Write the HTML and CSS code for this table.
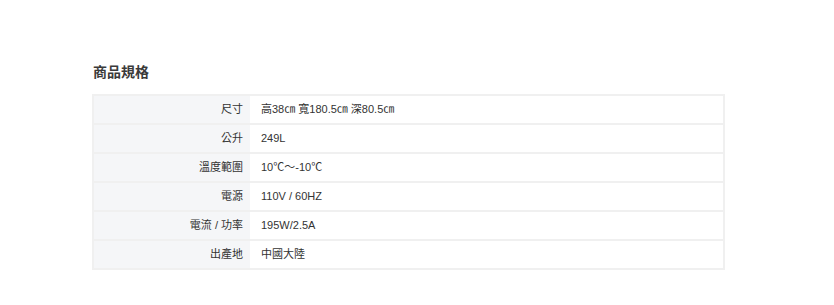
FILE: index.html
```html
<!DOCTYPE html>
<html lang="zh-Hant">
<head>
    <meta charset="UTF-8">
    <meta name="viewport" content="width=device-width, initial-scale=1.0">
    <title>商品規格</title>
    <link rel="stylesheet" href="styles.css">
</head>
<body>

    <section class="spec">
        <h2 class="spec-title">商品規格</h2>
        <table class="spec-table">
            <tr>
                <th>尺寸</th>
                <td>高38㎝ 寬180.5㎝ 深80.5㎝</td>
            </tr>
            <tr>
                <th>公升</th>
                <td>249L</td>
            </tr>
            <tr>
                <th>溫度範圍</th>
                <td>10℃～-10℃</td>
            </tr>
            <tr>
                <th>電源</th>
                <td>110V / 60HZ</td>
            </tr>
            <tr>
                <th>電流 / 功率</th>
                <td>195W/2.5A</td>
            </tr>
            <tr>
                <th>出產地</th>
                <td>中國大陸</td>
            </tr>
        </table>
    </section>

</body>
</html>
```

FILE: styles.css
```css
/* Page base */
html, body {
    margin: 0;
    padding: 0;
    background-color: #fff;
    color: #333;
    font-family: "Liberation Sans", "Noto Sans CJK TC", sans-serif;
}

/* Spec block */
.spec {
    width: 633px;
    margin: 0 0 0 92px;
    padding-top: 62px;
}

.spec-title {
    margin: 0 0 12px 1px;
    font-size: 14px;
    font-weight: bold;
    line-height: 20px;
    color: #3a3a3a;
}

/* Spec table */
.spec-table {
    width: 100%;
    border-collapse: collapse;
    border: 2px solid #f0f0f0;
    font-size: 11px;
    color: #333;
}

.spec-table th,
.spec-table td {
    padding: 0;
    line-height: 27px;
    border-bottom: 2px solid #f0f0f0;
    font-weight: normal;
    vertical-align: middle;
}

.spec-table th {
    width: 149px;
    padding-right: 7px;
    text-align: right;
    background-color: #f5f6f8;
}

.spec-table td {
    padding-left: 11px;
    text-align: left;
}
```
